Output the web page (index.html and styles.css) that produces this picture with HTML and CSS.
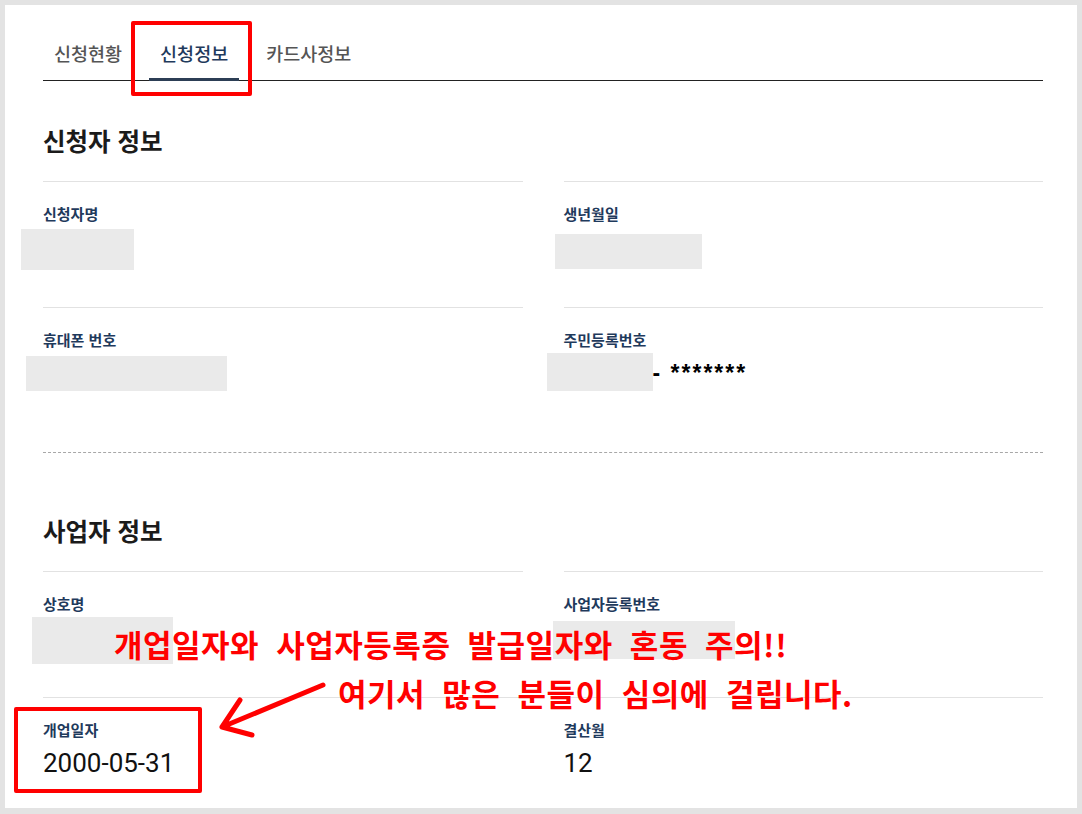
FILE: index.html
```html
<!DOCTYPE html>
<html lang="ko">
<head>
<meta charset="utf-8">
<title>신청정보</title>
<link rel="stylesheet" href="styles.css">
</head>
<body>
<div class="panel">
  <nav class="tabs">
    <a class="tab">신청현황</a>
    <a class="tab active">신청정보</a>
    <a class="tab">카드사정보</a>
  </nav>

  <section class="section first">
    <h2 class="heading">신청자 정보</h2>
    <div class="grid">
      <div class="cell">
        <div class="label">신청자명</div>
        <div class="value"><span class="redact r1"></span></div>
      </div>
      <div class="cell">
        <div class="label">생년월일</div>
        <div class="value"><span class="redact r1b"></span></div>
      </div>
      <div class="cell">
        <div class="label">휴대폰 번호</div>
        <div class="value"><span class="redact r2"></span></div>
      </div>
      <div class="cell">
        <div class="label">주민등록번호</div>
        <div class="value"><span class="redact r2b"></span><span class="masked">- *******</span></div>
      </div>
    </div>
  </section>

  <section class="section second">
    <h2 class="heading">사업자 정보</h2>
    <div class="grid">
      <div class="cell">
        <div class="label">상호명</div>
        <div class="value"><span class="redact r3"></span></div>
      </div>
      <div class="cell">
        <div class="label">사업자등록번호</div>
        <div class="value"><span class="redact r3b"></span></div>
      </div>
      <div class="cell">
        <div class="label">개업일자</div>
        <div class="value num">2000-05-31</div>
      </div>
      <div class="cell">
        <div class="label">결산월</div>
        <div class="value num">12</div>
      </div>
    </div>
  </section>

  <div class="mark mark-tab"></div>
  <div class="mark mark-date"></div>
  <p class="note note1">개업일자와 사업자등록증 발급일자와 혼동 주의!!</p>
  <p class="note note2">여기서 많은 분들이 심의에 걸립니다.</p>
  <svg class="arrow" width="120" height="70" viewBox="0 0 120 70">
    <path d="M110 8 L9 50 M27 23 L9 50 L39 58" fill="none" stroke="#ff0000" stroke-width="5" stroke-linecap="round" stroke-linejoin="round"/>
  </svg>
</div>
</body>
</html>
```

FILE: styles.css
```css
* { box-sizing: border-box; }

html, body {
  margin: 0;
  padding: 0;
}

body {
  background: #e3e3e3;
  width: 1082px;
  height: 814px;
  overflow: hidden;
  padding: 5px 5px 6px 5px;
  font-family: "Noto Sans CJK KR", "Noto Sans", sans-serif;
}

.panel {
  position: relative;
  background: #ffffff;
  height: 803px;
  overflow: hidden;
  padding: 0 34px 0 38px;
}

/* Tabs */
.tabs {
  display: flex;
  gap: 16px;
  padding-top: 20px;
  border-bottom: 1px solid #222;
}

.tab {
  display: block;
  padding: 16px 11px 13px;
  margin-bottom: -1px;
  line-height: 24px;
  font-size: 18.5px;
  font-weight: 500;
  color: #555;
  border-bottom: 3px solid transparent;
}

.tab.active {
  color: #1f3a5c;
  border-bottom-color: #2c3e55;
}

/* Sections */
.heading {
  margin: 0 0 25px 0;
  font-size: 24.5px;
  line-height: 30px;
  font-weight: 700;
  color: #1b1b1b;
}

.section.first {
  margin-top: 45px;
  padding-bottom: 19px;
  border-bottom: 1px dashed #a8a8a8;
}

.section.second {
  margin-top: 63px;
}

.grid {
  display: grid;
  grid-template-columns: 1fr 1fr;
  column-gap: 41px;
}

.cell {
  border-top: 1px solid #e2e2e2;
  padding: 22px 0 42px 0;
}

.label {
  font-size: 15px;
  line-height: 20px;
  font-weight: 700;
  color: #1f3a5c;
}

.value {
  display: flex;
  align-items: flex-start;
  height: 36px;
  margin-top: 5px;
  line-height: 36px;
}

.value.num {
  font-family: Roboto, "Noto Sans", sans-serif;
  font-size: 26px;
  color: #111;
}

.masked {
  font-family: "Liberation Sans", Arial, sans-serif;
  font-weight: 700;
  font-size: 23px;
  letter-spacing: 2px;
  color: #000;
  line-height: 36px;
  white-space: pre;
  margin-left: 0;
}

/* Redaction boxes */
.redact {
  display: block;
  flex: none;
  background: #eaeaea;
}
.r1  { margin-left: -22px; width: 113px; height: 41px; margin-top: 0; }
.r1b { margin-left: -9px;  width: 147px; height: 35px; margin-top: 5px; }
.r2  { margin-left: -17px; width: 201px; height: 35px; margin-top: 1px; }
.r2b { margin-left: -17px; width: 106px; height: 38px; margin-top: -2px; }
.r3  { margin-left: -11px; width: 141px; height: 47px; margin-top: -2px; }
.r3b { margin-left: -11px; width: 182px; height: 38px; margin-top: 2px; }

/* Annotations (overlay) */
.mark {
  position: absolute;
  border: 4px solid #ff0000;
  border-radius: 2px;
}
.mark-tab  { left: 126px; top: 16px; width: 121px; height: 75px; }
.mark-date { left: 9px;   top: 702px; width: 188px; height: 86px; }

.note {
  position: absolute;
  margin: 0;
  color: #ff0000;
  font-family: "Noto Sans CJK KR", sans-serif;
  font-weight: 700;
  font-size: 31px;
  line-height: 40px;
  letter-spacing: 0.5px;
  word-spacing: 8px;
  white-space: nowrap;
}
.note1 { left: 109px; top: 619px; }
.note2 { left: 333px; top: 668px; }

.arrow {
  position: absolute;
  left: 208px;
  top: 672px;
}
```
